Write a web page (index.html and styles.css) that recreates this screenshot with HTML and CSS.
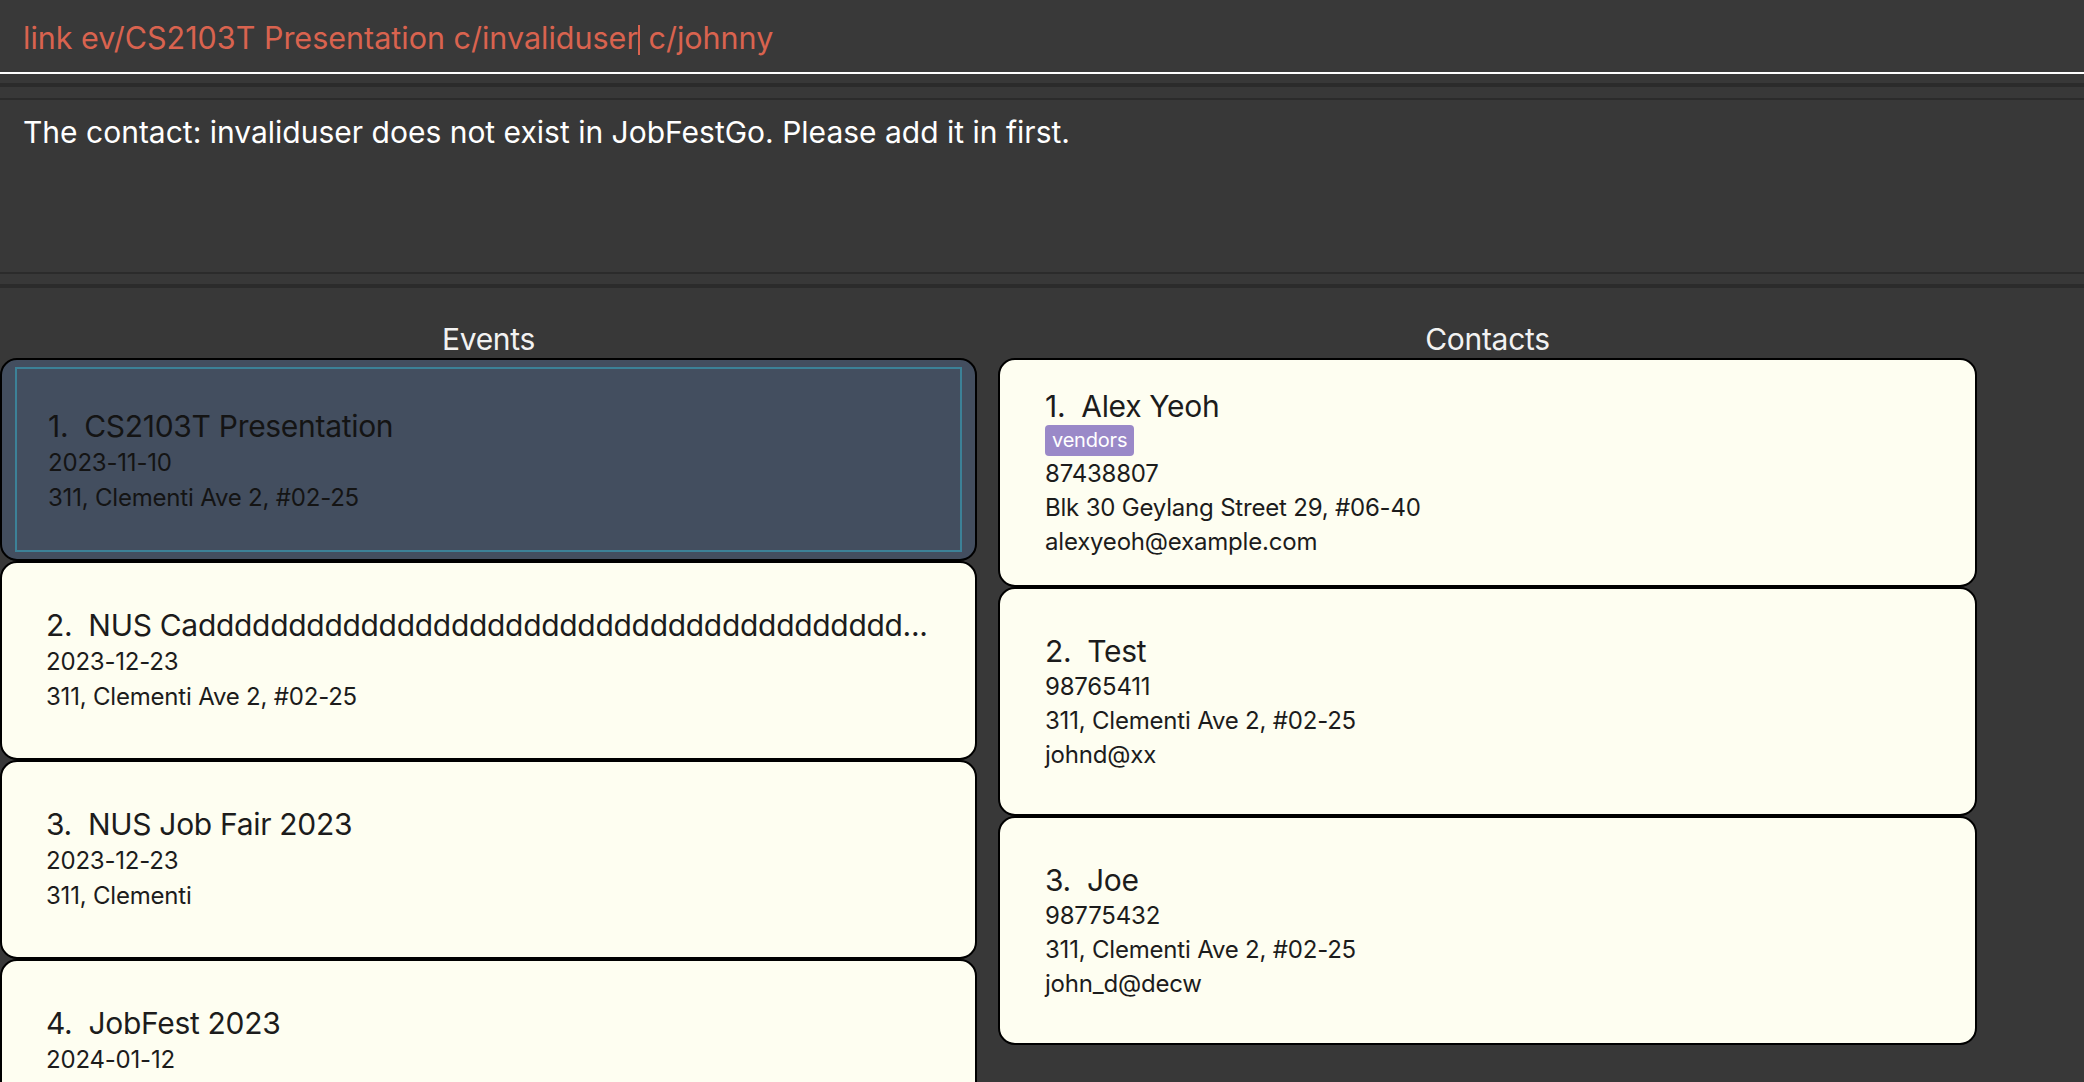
FILE: index.html
```html
<!DOCTYPE html>
<html lang="en">
<head>
<meta charset="utf-8">
<title>JobFestGo</title>
<link rel="stylesheet" href="styles.css">
</head>
<body>
<div class="app">
  <div class="command-box">
    <div class="command-text">link ev/CS2103T Presentation c/invaliduser<span class="caret"></span> c/johnny</div>
  </div>
  <div class="divider divider-top"></div>
  <div class="result">The contact: invaliduser does not exist in JobFestGo. Please add it in first.</div>
  <div class="divider divider-bottom"></div>
  <div class="lists">
    <section class="column">
      <h2 class="column-title">Events</h2>
      <div class="list">
        <div class="card event-card selected">
          <div class="card-inner">
            <div class="card-title"><span class="idx">1.</span>CS2103T Presentation</div>
            <div class="detail">2023-11-10</div>
            <div class="detail">311, Clementi Ave 2, #02-25</div>
          </div>
        </div>
        <div class="card event-card">
          <div class="card-inner">
            <div class="card-title"><span class="idx">2.</span>NUS Caddddddddddddddddddddddddddddddddddddddd...</div>
            <div class="detail">2023-12-23</div>
            <div class="detail">311, Clementi Ave 2, #02-25</div>
          </div>
        </div>
        <div class="card event-card">
          <div class="card-inner">
            <div class="card-title"><span class="idx">3.</span>NUS Job Fair 2023</div>
            <div class="detail">2023-12-23</div>
            <div class="detail">311, Clementi</div>
          </div>
        </div>
        <div class="card event-card">
          <div class="card-inner">
            <div class="card-title"><span class="idx">4.</span>JobFest 2023</div>
            <div class="detail">2024-01-12</div>
          </div>
        </div>
      </div>
    </section>
    <section class="column">
      <h2 class="column-title">Contacts</h2>
      <div class="list">
        <div class="card contact-card">
          <div class="card-inner">
            <div class="card-title"><span class="idx">1.</span>Alex Yeoh</div>
            <div class="tags"><span class="tag">vendors</span></div>
            <div class="detail">87438807</div>
            <div class="detail">Blk 30 Geylang Street 29, #06-40</div>
            <div class="detail">alexyeoh@example.com</div>
          </div>
        </div>
        <div class="card contact-card">
          <div class="card-inner">
            <div class="card-title"><span class="idx">2.</span>Test</div>
            <div class="detail">98765411</div>
            <div class="detail">311, Clementi Ave 2, #02-25</div>
            <div class="detail">johnd@xx</div>
          </div>
        </div>
        <div class="card contact-card">
          <div class="card-inner">
            <div class="card-title"><span class="idx">3.</span>Joe</div>
            <div class="detail">98775432</div>
            <div class="detail">311, Clementi Ave 2, #02-25</div>
            <div class="detail">john_d@decw</div>
          </div>
        </div>
      </div>
    </section>
  </div>
</div>
</body>
</html>
```
FILE: styles.css
```css
* { box-sizing: border-box; }
html, body {
  margin: 0;
  padding: 0;
  height: 100%;
  overflow: hidden;
  background: #383838;
  font-family: "Inter", "Noto Sans", "Liberation Sans", sans-serif;
}
.app {
  width: 2084px;
  height: 1082px;
  overflow: hidden;
  background: #383838;
}
.command-box {
  height: 74px;
  padding: 19px 23px 0;
  border-bottom: 2px solid #ffffff;
  background: #393939;
}
.command-text {
  font-size: 30.5px;
  line-height: 38px;
  color: #d9634f;
  white-space: pre;
}
.caret {
  display: inline-block;
  width: 2px;
  height: 30px;
  background: #d9634f;
  vertical-align: -6px;
}
.divider {
  background: #383838;
}
.divider-top {
  margin-top: 9px;
  height: 17px;
  border-top: 4px solid #2b2b2b;
  border-bottom: 2px solid #2b2b2b;
}
.result {
  height: 172px;
  padding: 14px 23px 0;
  font-size: 30px;
  line-height: 36px;
  color: #ffffff;
}
.divider-bottom {
  height: 16px;
  border-top: 2px solid #2b2b2b;
  border-bottom: 4px solid #2b2b2b;
}
.lists {
  display: grid;
  grid-template-columns: 977px 979px;
  column-gap: 21px;
  align-items: start;
}
.column-title {
  margin: 0;
  padding-top: 32px;
  height: 70px;
  font-size: 30px;
  line-height: 38px;
  font-weight: 400;
  color: #f2f2f2;
  text-align: center;
  letter-spacing: -0.3px;
}
.list {
  display: flex;
  flex-direction: column;
}
.card {
  border: 2px solid #000000;
  border-radius: 17px;
  background: #fefef1;
  color: #1c1c1c;
  overflow: hidden;
}
.card-inner {
  height: 100%;
  display: flex;
  flex-direction: column;
}
.event-card {
  height: 199px;
}
.event-card .card-inner {
  padding: 43px 30px 0 44px;
}
.event-card.selected {
  height: 203px;
  background: #434e5f;
  color: #141414;
}
.event-card.selected .card-inner {
  margin: 7px 13px;
  height: calc(100% - 14px);
  border: 2px solid #3c8197;
  padding: 38px 32px 0 31px;
}
.contact-card {
  height: 229px;
}
.contact-card .card-inner {
  justify-content: center;
  padding: 0 48px 0 45px;
}
.card-title {
  font-size: 30px;
  line-height: 38px;
  white-space: nowrap;
  overflow: hidden;
  text-overflow: ellipsis;
  letter-spacing: -0.3px;
}
.idx {
  margin-right: 16px;
}
.detail {
  font-size: 24px;
  line-height: 35px;
  white-space: nowrap;
  letter-spacing: -0.2px;
}
.contact-card .detail {
  line-height: 34px;
}
.tags {
  display: flex;
  height: 32px;
  align-items: flex-start;
}
.tag {
  display: inline-block;
  height: 31px;
  padding: 0 7px;
  border-radius: 4px;
  background: #9a89c8;
  color: #ffffff;
  font-size: 20px;
  line-height: 31px;
  letter-spacing: -0.2px;
}
```
